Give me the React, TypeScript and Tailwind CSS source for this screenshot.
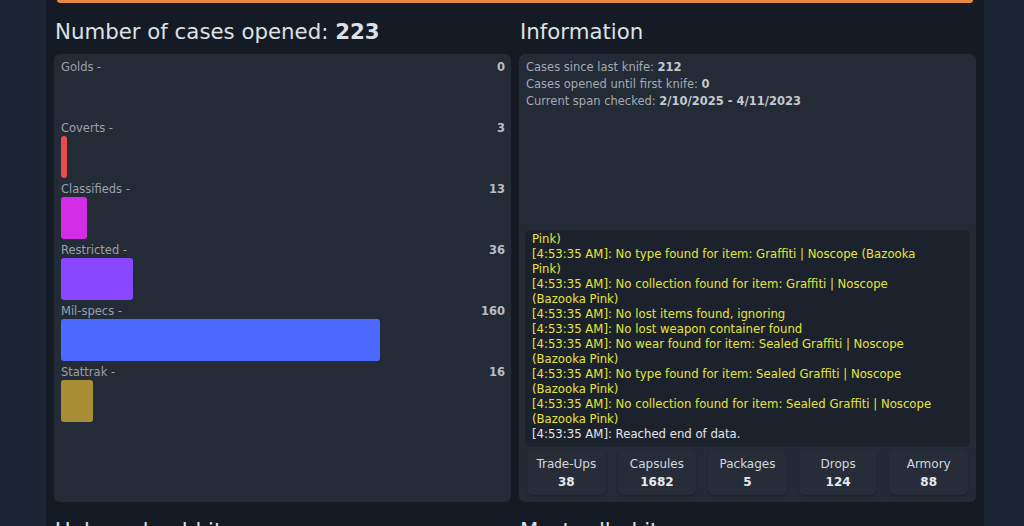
import React from "react";

const rows = [
  { label: "Golds", count: 0, color: "bg-[#e4ae39]" },
  { label: "Coverts", count: 3, color: "bg-[#e94c4c]" },
  { label: "Classifieds", count: 13, color: "bg-[#d32ce6]" },
  { label: "Restricted", count: 36, color: "bg-[#8847ff]" },
  { label: "Mil-specs", count: 160, color: "bg-[#4b69ff]" },
  { label: "Stattrak", count: 16, color: "bg-[#a98d35]" },
];

const TOTAL = 223;

const logs: { t: string; white?: boolean }[] = [
  { t: "[4:53:35 AM]: No wear found for item: Graffiti | Noscope (Bazooka Pink)" },
  { t: "[4:53:35 AM]: No type found for item: Graffiti | Noscope (Bazooka Pink)" },
  { t: "[4:53:35 AM]: No collection found for item: Graffiti | Noscope (Bazooka Pink)" },
  { t: "[4:53:35 AM]: No lost items found, ignoring" },
  { t: "[4:53:35 AM]: No lost weapon container found" },
  { t: "[4:53:35 AM]: No wear found for item: Sealed Graffiti | Noscope (Bazooka Pink)" },
  { t: "[4:53:35 AM]: No type found for item: Sealed Graffiti | Noscope (Bazooka Pink)" },
  { t: "[4:53:35 AM]: No collection found for item: Sealed Graffiti | Noscope (Bazooka Pink)" },
  { t: "[4:53:35 AM]: Reached end of data.", white: true },
];

const stats = [
  { label: "Trade-Ups", value: "38" },
  { label: "Capsules", value: "1682" },
  { label: "Packages", value: "5" },
  { label: "Drops", value: "124" },
  { label: "Armory", value: "88" },
];

export default function App() {
  return (
    <div
      className="w-[1024px] h-[526px] overflow-hidden bg-[#1b2535] flex"
      style={{ fontFamily: '"DejaVu Sans", Verdana, sans-serif' }}
    >
      <div className="ml-[46px] w-[938px] h-full bg-[#141b24] px-2 flex flex-col">
        <div className="mx-[3px] h-[3px] bg-[#e58a3e] rounded-b-[3px] shrink-0" />
        <div className="grid grid-cols-2 gap-2 mt-[15px]">
          <div className="flex flex-col">
            <h2 className="text-[21.3px] leading-[28px] text-[#dde1e6] pl-px mb-2">
              Number of cases opened: <span className="font-bold">223</span>
            </h2>
            <div className="h-[448px] bg-[#232b37] rounded-md pt-[5px] pl-[7px] pr-[6px]">
              {rows.map((r) => (
                <div key={r.label} className="mb-[3px]">
                  <div className="flex justify-between text-[11.5px] leading-4">
                    <span className="text-[#9aa1ab]">{r.label} -</span>
                    <span className="font-bold text-[#b7bec6]">{r.count}</span>
                  </div>
                  <div className="h-[42px]">
                    {r.count > 0 && (
                      <div
                        className={`h-full rounded-[3px] ${r.color}`}
                        style={{ width: `${(r.count / TOTAL) * 100}%`, minWidth: 6 }}
                      />
                    )}
                  </div>
                </div>
              ))}
            </div>
            <h2 className="text-[21.3px] leading-[28px] text-[#dde1e6] pl-px mt-[15px]">
              Unboxed gold items
            </h2>
          </div>
          <div className="flex flex-col">
            <h2 className="text-[21.3px] leading-[28px] text-[#dde1e6] pl-px mb-2">Information</h2>
            <div className="h-[448px] bg-[#232b37] rounded-md flex flex-col pt-[5px] px-[6px] pb-[7px]">
              <div className="text-[11.5px] leading-[17px] text-[#a3aab3] pl-px">
                <div>
                  Cases since last knife: <span className="font-bold text-[#c3c9d0]">212</span>
                </div>
                <div>
                  Cases opened until first knife: <span className="font-bold text-[#c3c9d0]">0</span>
                </div>
                <div>
                  Current span checked:{" "}
                  <span className="font-bold text-[#c3c9d0]">2/10/2025 - 4/11/2023</span>
                </div>
              </div>
              <div className="flex-1" />
              <div className="h-[217px] bg-[#1c222c] rounded-md flex flex-col pt-[2px] pb-[5px] pl-[7px] pr-[27px]">
                <div className="flex-1 overflow-hidden flex flex-col justify-end text-[11.7px] leading-[15px]">
                  {logs.map((l, i) => (
                    <div key={i} className={l.white ? "text-[#e3e6ea]" : "text-[#e4e43e]"}>
                      {l.t}
                    </div>
                  ))}
                </div>
              </div>
              <div className="grid grid-cols-5 gap-3 mt-[3px] px-[2px]">
                {stats.map((s) => (
                  <div
                    key={s.label}
                    className="h-[45px] bg-[#262d38] rounded-md flex flex-col items-center justify-center shadow-[0_1px_2px_rgba(0,0,0,0.25)]"
                  >
                    <div className="text-[12px] leading-[18px] text-[#d3d8de]">{s.label}</div>
                    <div className="text-[12px] leading-[18px] font-bold text-[#e6e9ed]">{s.value}</div>
                  </div>
                ))}
              </div>
            </div>
            <h2 className="text-[21.3px] leading-[28px] text-[#dde1e6] pl-px mt-[15px]">
              Most rolled items
            </h2>
          </div>
        </div>
      </div>
    </div>
  );
}
